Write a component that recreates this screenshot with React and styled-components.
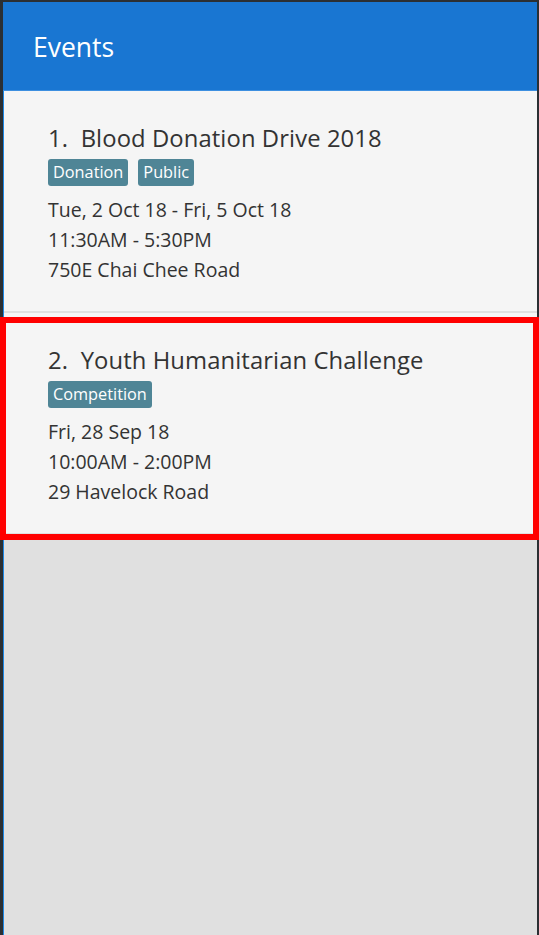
import React from 'react'
import styled, {createGlobalStyle} from 'styled-components'

const GlobalStyle = createGlobalStyle`
   body{
      margin: 0;
      font-family: "Open Sans", "Noto Sans", sans-serif;
   }
`

const events = [
   {
      id: 1,
      name: 'Blood Donation Drive 2018',
      tags: ['Donation', 'Public'],
      date: 'Tue, 2 Oct 18 - Fri, 5 Oct 18',
      time: '11:30AM - 5:30PM',
      venue: '750E Chai Chee Road',
   },
   {
      id: 2,
      name: 'Youth Humanitarian Challenge',
      tags: ['Competition'],
      date: 'Fri, 28 Sep 18',
      time: '10:00AM - 2:00PM',
      venue: '29 Havelock Road',
      selected: true,
   },
]

function EventCard({event}) {
  return (
   <Card selected={event.selected}>
      <Title>{event.id}.&nbsp;&nbsp;{event.name}</Title>
      <Tags>
         {event.tags.map(t => <Tag key={t}>{t}</Tag>)}
      </Tags>
      <Detail>{event.date}</Detail>
      <Detail>{event.time}</Detail>
      <Detail>{event.venue}</Detail>
   </Card>
  )
}

export default function App() {
  return (
   <>
   <GlobalStyle/>
   <Frame>
      <Header>Events</Header>
      <List>
         {events.map(e => <EventCard key={e.id} event={e}/>)}
      </List>
   </Frame>
   </>
  )
}

const Frame = styled.div`
   height: 935px;
   box-sizing: border-box;
   border-top: 2px solid #2b2f33;
   border-left: 3px solid #2b2f33;
   border-right: 2px solid #2b2f33;
   display: flex;
   flex-direction: column;
`

const Header = styled.div`
   height: 89px;
   box-sizing: border-box;
   flex-shrink: 0;
   background: #1976d2;
   border-bottom: 1px solid #3d8fe0;
   color: #fff;
   font-size: 26.5px;
   display: flex;
   align-items: center;
   padding: 1px 0 0 30px;
`

const List = styled.div`
   flex: 1;
   background: #e0e0e0;
   border-left: 1px solid #1e88e5;
   display: flex;
   flex-direction: column;
   gap: 2px;
`

const Card = styled.div`
   position: relative;
   background: #f5f5f5;
   padding: 30px 0 26px 44px;
   ${p => p.selected && `
      &::after{
         content: '';
         position: absolute;
         top: 4px;
         bottom: -7px;
         left: -4px;
         right: -2px;
         border: 6px solid #ff0000;
      }
   `}
`

const Title = styled.div`
   font-size: 23.8px;
   line-height: 34px;
   color: #333;
   letter-spacing: 0.1px;
`

const Tags = styled.div`
   display: flex;
   gap: 10px;
   margin: 4px 0 9px;
`

const Tag = styled.span`
   background: #4f8596;
   color: #fff;
   font-size: 16.3px;
   line-height: 27px;
   padding: 0 5px;
   border-radius: 3px;
`

const Detail = styled.div`
   font-size: 19.5px;
   line-height: 30px;
   color: #333;
`
